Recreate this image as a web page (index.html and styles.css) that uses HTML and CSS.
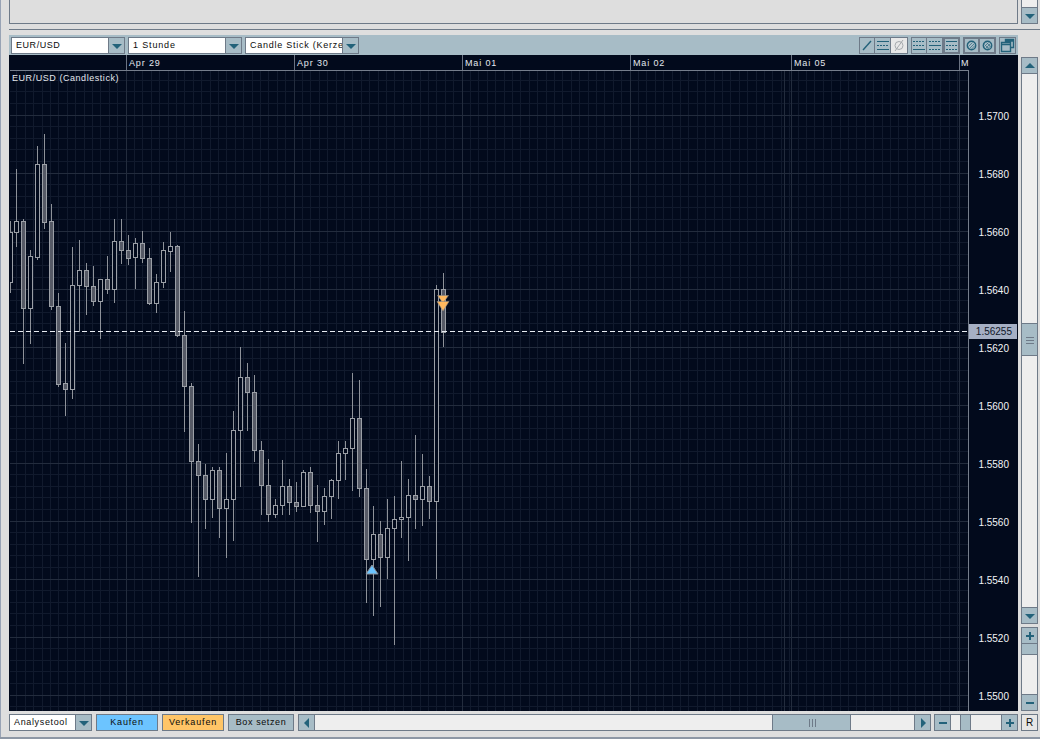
FILE: index.html
```html
<!DOCTYPE html>
<html lang="de">
<head>
<meta charset="utf-8">
<title>EUR/USD Chart</title>
<link rel="stylesheet" href="styles.css">
</head>
<body>
<div class="app">
  <div class="top-row">
    <div class="top-panel"></div>
    <div class="vscroll top-scroll">
      <div class="track"></div>
      <div class="btn square"><svg width="16" height="16" viewBox="0 0 16 16"><path class="tri" d="M3 6h10l-5 5z"/></svg></div>
    </div>
  </div>
  <div class="divider"></div>

  <div class="work">
    <div class="chart-col">
      <div class="toolbar">
        <div class="select s1"><span class="value">EUR/USD</span><span class="btn drop"><svg width="16" height="16" viewBox="0 0 16 16"><path class="tri" d="M3 6h10l-5 5z"/></svg></span></div>
        <div class="select s2"><span class="value">1 Stunde</span><span class="btn drop"><svg width="16" height="16" viewBox="0 0 16 16"><path class="tri" d="M3 6h10l-5 5z"/></svg></span></div>
        <div class="select s3"><span class="value">Candle Stick (Kerze</span><span class="btn drop"><svg width="16" height="16" viewBox="0 0 16 16"><path class="tri" d="M3 6h10l-5 5z"/></svg></span></div>
        <div class="tools">
          <div class="group">
            <span class="tool"><svg width="14" height="15" viewBox="0 0 14 15"><path class="ln bold" d="M3 12L11 3"/></svg></span>
            <span class="tool"><svg width="14" height="15" viewBox="0 0 14 15"><path class="ln" d="M1 3.500h12"/><path class="ln dash" d="M1 7.500h12"/><path class="ln" d="M1 11.500h12"/></svg></span>
            <span class="tool off"><svg width="14" height="15" viewBox="0 0 14 15"><circle class="ln grey" cx="7" cy="7.500" r="4"/><path class="ln grey" d="M3 13L11 2"/></svg></span>
          </div>
          <div class="group">
            <span class="tool"><svg width="14" height="15" viewBox="0 0 14 15"><path class="ln dash" d="M1 3.500h12"/><path class="ln dash" d="M1 7.500h12"/><path class="ln" d="M1 11.500h12"/></svg></span>
            <span class="tool"><svg width="14" height="15" viewBox="0 0 14 15"><path class="ln dash" d="M1 3.500h12"/><path class="ln" d="M1 7.500h12"/><path class="ln dash" d="M1 11.500h12"/></svg></span>
            <span class="tool on"><svg width="13" height="13" viewBox="0 1 13 13"><path class="ln" d="M1 3.500h11"/><path class="ln dash" d="M1 7.500h11"/><path class="ln dash" d="M1 11.500h11"/></svg></span>
          </div>
          <div class="group">
            <span class="tool on"><svg width="13" height="13" viewBox="0 0 13 13"><circle class="ln bold" cx="6.500" cy="6.500" r="4.200"/><path class="ln thin" d="M4.500 9.500L9.500 4.500M3.500 7.500L7.500 3.500M6.500 10L10 6.500"/></svg></span>
            <span class="tool on"><svg width="13" height="13" viewBox="0 0 13 13"><circle class="ln bold" cx="6.500" cy="6.500" r="4.200"/><path class="ln thin" d="M4.500 9.500L9.500 4.500M3.500 7.500L7.500 3.500M6.500 10L10 6.500M3.500 5.500L7.500 9.500M5.500 3.500L9.500 7.500"/></svg></span>
          </div>
          <div class="group">
            <span class="tool wide"><svg width="15" height="15" viewBox="0 0 15 15"><path class="ln bold" d="M5.500 4.500V1.500h8v8h-3M1.500 4.500h9v9h-9zM1.500 6.500h9M5.500 3h8"/></svg></span>
          </div>
        </div>
      </div>
      <svg id="chart" class="chart" width="1009" height="656" viewBox="9 55 1009 656">
        <defs><clipPath id="plot-clip"><rect x="10" y="70" width="958" height="641"/></clipPath></defs>
        <rect class="chart-bg" x="9" y="55" width="1009" height="656"/>
        <g id="grid"></g>
        <g id="candles" clip-path="url(#plot-clip)"></g>
        <path class="frame" d="M9.500 70.500H968.500V711"/>
        <path class="head-tick" d="M126.500 55V70M294.500 55V70M462.500 55V70M630.500 55V70M791.500 55V70M959.500 55V70"/>
        <path class="now" d="M10 331.500H969"/>
        <path class="buy" d="M372 565L378 574H366Z"/>
        <path class="sell" d="M437.500 295.500H448.500L443 303Z"/>
        <path class="sell" d="M437 301.500H449L443 311Z"/>
        <g class="labels">
          <text x="129" y="66">Apr 29</text>
          <text x="297" y="66">Apr 30</text>
          <text x="465" y="66">Mai 01</text>
          <text x="633" y="66">Mai 02</text>
          <text x="794" y="66">Mai 05</text>
          <text x="961" y="66">M</text>
          <text class="title" x="12" y="81">EUR/USD (Candlestick)</text>
        </g>
        <g class="axis">
          <text x="1009" y="120">1.5700</text>
          <text x="1009" y="178">1.5680</text>
          <text x="1009" y="236">1.5660</text>
          <text x="1009" y="294">1.5640</text>
          <text x="1009" y="352">1.5620</text>
          <text x="1009" y="410">1.5600</text>
          <text x="1009" y="468">1.5580</text>
          <text x="1009" y="526">1.5560</text>
          <text x="1009" y="584">1.5540</text>
          <text x="1009" y="642">1.5520</text>
          <text x="1009" y="700">1.5500</text>
        </g>
        <rect class="tag" x="969" y="324" width="48" height="15"/>
        <text class="tag-text" x="1012" y="335">1.56255</text>
      </svg>
    </div>

    <div class="side-col">
      <div class="vscroll main-scroll">
        <div class="btn square"><svg width="16" height="16" viewBox="0 0 16 16"><path class="tri" d="M3 10h10l-5-5z"/></svg></div>
        <div class="track grow-a"></div>
        <div class="btn thumb-v"><svg width="16" height="12" viewBox="0 0 16 12"><path class="grip" d="M4 3.500h8M4 6.500h8M4 9.500h8"/></svg></div>
        <div class="track grow-b"></div>
        <div class="btn square"><svg width="16" height="16" viewBox="0 0 16 16"><path class="tri" d="M3 6h10l-5 5z"/></svg></div>
      </div>
      <div class="vscroll zoom-scroll">
        <div class="btn square"><svg width="16" height="16" viewBox="0 0 16 16"><path class="sign" d="M8 4v8M4 8h8"/></svg></div>
        <div class="btn zoom-thumb-v"></div>
        <div class="track grow-b"></div>
        <div class="btn square"><svg width="16" height="16" viewBox="0 0 16 16"><path class="sign" d="M4 8h8"/></svg></div>
      </div>
    </div>
  </div>

  <div class="bottom">
    <div class="select s4"><span class="value">Analysetool</span><span class="btn drop"><svg width="16" height="16" viewBox="0 0 16 16"><path class="tri" d="M3 6h10l-5 5z"/></svg></span></div>
    <div class="action buy-btn">Kaufen</div>
    <div class="action sell-btn">Verkaufen</div>
    <div class="action box-btn">Box setzen</div>
    <div class="hscroll main-h">
      <div class="btn square"><svg width="16" height="16" viewBox="0 0 16 16"><path class="tri" d="M10 3v10l-5-5z"/></svg></div>
      <div class="track h1"></div>
      <div class="btn thumb-h"><svg width="12" height="16" viewBox="0 0 12 16"><path class="grip" d="M3.500 4v8M6.500 4v8M9.500 4v8"/></svg></div>
      <div class="track h2"></div>
      <div class="btn square"><svg width="16" height="16" viewBox="0 0 16 16"><path class="tri" d="M6 3v10l5-5z"/></svg></div>
    </div>
    <div class="hscroll zoom-h">
      <div class="btn square"><svg width="16" height="16" viewBox="0 0 16 16"><path class="sign" d="M4 8h8"/></svg></div>
      <div class="track h3"></div>
      <div class="btn zoom-thumb-h"></div>
      <div class="track h4"></div>
      <div class="btn square"><svg width="16" height="16" viewBox="0 0 16 16"><path class="sign" d="M8 4v8M4 8h8"/></svg></div>
    </div>
    <div class="reset">R</div>
  </div>
  <div class="foot"></div>
</div>
<script src="chart.js"></script>
</body>
</html>
```
FILE: styles.css
```css
* { box-sizing: border-box; }
html, body { margin: 0; padding: 0; background: #dedede; }
body { width: 1040px; height: 739px; overflow: hidden; font-family: "Liberation Sans", Arial, sans-serif; font-size: 9px; color: #0b0b0b; }
.app { width: 1040px; height: 739px; padding-left: 8px; border-left: 1px solid #98a3b5; display: flex; flex-direction: column; background: #dedede; }

.top-row { display: flex; height: 24px; gap: 3px; }
.top-panel { width: 1009px; border: 1px solid #6e7a88; border-top: 0; background: #dedede; }
.vscroll { width: 16px; display: flex; flex-direction: column; }
.top-scroll { width: 17px; }
.track { background: #eeeeee; border-left: 1px solid #6e7a88; border-right: 1px solid #6e7a88; flex: 1 1 auto; }
.btn { background: #a7bcc6; border: 1px solid #6e7a88; display: flex; align-items: center; justify-content: center; flex: none; }
.btn svg { display: block; flex: none; }
.square { width: 17px; height: 17px; }
.tri { fill: #23627a; }
.sign { stroke: #23627a; stroke-width: 2; fill: none; }
.grip { stroke: #6e7a88; stroke-width: 1; fill: none; }

.divider { height: 1px; margin-top: 5px; background: #6e7a88; }

.work { display: flex; gap: 3px; margin-top: 5px; height: 676px; }
.chart-col { width: 1009px; display: flex; flex-direction: column; }
.toolbar { height: 20px; background: #a7bcc6; display: flex; align-items: flex-start; padding: 2px 2px 0 2px; }
.select { height: 17px; display: flex; background: #fff; border: 1px solid #6e7a88; font-size: 9px; letter-spacing: 0.85px; overflow: hidden; flex: none; }
.select .value { flex: 1 1 0; min-width: 0; line-height: 15px; padding-left: 4px; white-space: nowrap; }
.drop { width: 16px; height: 15px; border-width: 0 0 0 1px; }
.s1 { width: 114px; margin-right: 3px; letter-spacing: .55px; }
.s2 { width: 114px; margin-right: 3px; }
.s3 { width: 114px; letter-spacing: .75px; }
.s4 { width: 83px; height: 17px; letter-spacing: .65px; }
.tools { display: flex; margin-left: auto; gap: 3px; }
.group { display: flex; }
.tool { width: 16px; height: 17px; background: #a7bcc6; border: 1px solid #6e7a88; display: flex; align-items: center; justify-content: center; flex: none; }
.tool + .tool { border-left: 0; }
.tool svg { display: block; flex: none; }
.tool.off { background: #e8e8e8; width: 17px; }
.tool.on { border: 2px solid #6e7a88; width: 17px; }
.tool.on + .tool.on { width: 16px; border-left: 0; }
.tool.wide { width: 17px; }
.ln { stroke: #23627a; stroke-width: 1; fill: none; }
.ln.bold { stroke-width: 1.4; }
.ln.dash { stroke-dasharray: 2 1; }
.ln.grey { stroke: #a5a9ad; }
.ln.thin { stroke-width: .8; stroke: #3f7488; }

.chart { display: block; }
.chart-bg { fill: #020a1c; }
.minor { stroke: #111a2d; stroke-width: 1; shape-rendering: crispEdges; }
.major { stroke: #232c3d; stroke-width: 1; shape-rendering: crispEdges; }
.frame { stroke: #767e8c; fill: none; stroke-width: 1; shape-rendering: crispEdges; }
.head-tick { stroke: #6b7382; fill: none; stroke-width: 1; shape-rendering: crispEdges; }
.now { stroke: #e8ecf2; stroke-width: 1; stroke-dasharray: 5 3; fill: none; shape-rendering: crispEdges; }
.wick { stroke: #8e9299; stroke-width: 1; shape-rendering: crispEdges; }
.body-down { fill: #565a66; stroke: #9b9fa6; stroke-width: 1; shape-rendering: crispEdges; }
.body-up { fill: #020a1c; stroke: #9b9fa6; stroke-width: 1; shape-rendering: crispEdges; }
.buy { fill: #6cc4ff; stroke: #8b9097; stroke-width: 1; }
.sell { fill: #ffb85e; stroke: #8b8a86; stroke-width: .6; }
.labels text { fill: #e4e8ee; font-size: 9px; letter-spacing: .85px; }
.labels .title { letter-spacing: .55px; }
.axis text { fill: #f2f4f7; font-size: 10px; text-anchor: end; }
.tag { fill: #a5afc4; }
.tag-text { fill: #10182a; font-size: 10px; text-anchor: end; }

.side-col { width: 17px; display: flex; flex-direction: column; padding-top: 22px; gap: 3px; }
.main-scroll { width: 17px; height: 567px; }
.grow-a { flex: 0 0 249px; }
.grow-b { flex: 1 1 auto; }
.thumb-v { height: 33px; }
.zoom-scroll { width: 17px; height: 84px; }
.zoom-thumb-v { height: 12px; margin-top: -1px; }

.bottom { display: flex; align-items: flex-start; margin-top: 3px; height: 17px; }
.action { width: 62px; height: 17px; line-height: 15px; border: 1px solid #6e7a88; text-align: center; letter-spacing: .85px; margin-left: 4px; flex: none; }
.buy-btn { background: #6cc4ff; }
.sell-btn { background: #ffc567; }
.box-btn { background: #a7bcc6; width: 66px; letter-spacing: .6px; }
.hscroll { display: flex; height: 17px; flex: none; }
.hscroll .track { border-width: 1px 0; border-style: solid; border-color: #6e7a88; }
.main-h { width: 633px; margin-left: 4px; }
.h1 { flex: 0 0 457px; }
.thumb-h { width: 79px; height: 17px; }
.h2 { flex: 1 1 auto; }
.zoom-h { width: 84px; margin-left: 3px; }
.h3 { flex: 0 0 9px; }
.zoom-thumb-h { width: 11px; height: 17px; }
.h4 { flex: 1 1 auto; }
.reset { width: 17px; height: 17px; margin-left: 3px; border: 1px solid #6e7a88; background: #e6e6e6; font-size: 10px; line-height: 15px; text-align: center; flex: none; }
.foot { height: 2px; margin: 6px 0 0 -9px; width: 1040px; background: #8d97a5; }
```
FILE: chart.js
```javascript
// x, wickTop, wickBottom, bodyTop, bodyBottom, filled
var CANDLES = [
  [10,221,293,232,282,0],[16,169,247,221,232,0],[23,219,364,221,308,1],[30,250,344,256,308,0],
  [37,146,260,164,257,0],[44,134,229,164,222,1],[51,204,310,221,306,1],[58,293,387,306,384,1],
  [65,343,416,383,389,1],[72,247,399,285,389,0],[79,240,332,270,285,0],[86,263,315,270,286,1],
  [93,266,306,286,301,1],[100,279,339,279,301,0],[107,256,294,279,289,1],[114,219,303,241,289,0],
  [121,219,264,241,250,1],[128,235,265,250,258,1],[135,238,289,243,257,0],[142,231,263,243,258,1],
  [149,248,305,258,303,1],[156,274,313,282,303,0],[163,242,288,250,282,0],[170,232,272,246,251,0],
  [177,245,337,246,335,1],[184,311,432,335,386,1],[191,383,523,386,461,1],[198,444,577,461,475,1],
  [205,464,529,475,499,1],[212,467,518,470,499,0],[219,467,538,470,508,1],[226,453,558,499,508,0],
  [233,411,541,430,499,0],[240,347,487,377,430,0],[247,363,431,377,392,1],[254,375,462,392,450,1],
  [261,441,515,450,485,1],[268,459,522,485,514,1],[275,499,518,505,514,0],[282,460,515,486,505,0],
  [289,479,515,486,502,1],[296,482,512,502,506,1],[303,470,506,472,506,0],[310,467,513,472,505,1],
  [317,485,542,505,511,1],[324,488,525,496,511,0],[331,479,519,480,496,0],[338,441,499,453,480,0],
  [345,441,480,448,453,0],[352,373,491,418,448,0],[359,380,497,418,488,1],[366,469,603,488,559,1],
  [373,506,616,534,559,0],[380,521,607,534,557,1],[387,499,579,528,557,0],[394,496,645,519,528,0],
  [401,461,538,517,519,0],[408,479,561,495,517,0],[415,435,529,495,499,1],[422,454,526,486,499,0],
  [429,476,519,486,501,1],[436,285,579,289,501,0],[443,273,347,289,332,1]
];

var NS = "http://www.w3.org/2000/svg";

function add(parent, tag, cls, attrs) {
  var el = document.createElementNS(NS, tag);
  el.setAttribute("class", cls);
  for (var k in attrs) el.setAttribute(k, attrs[k]);
  parent.appendChild(el);
  return el;
}

function line(parent, cls, x1, y1, x2, y2) {
  add(parent, "line", cls, { x1: x1, y1: y1, x2: x2, y2: y2 });
}

var grid = document.getElementById("grid");
var i, p;

// minor verticals, 8.4px apart
for (i = -14; i < 100; i++) {
  p = Math.floor(126 + i * 8.4) + 0.5;
  if (p > 10 && p < 968) line(grid, "minor", p, 71, p, 711);
}
// minor horizontals, 11.6px apart
for (i = -4; i < 52; i++) {
  p = Math.floor(115 + i * 11.6) + 0.5;
  if (p > 70 && p < 711) line(grid, "minor", 10, p, 968, p);
}
// major lines
[126.5, 294.5, 462.5, 630.5, 784.5, 791.5, 959.5].forEach(function (x) {
  line(grid, "major", x, 71, x, 711);
});
[115.5, 173.5, 231.5, 289.5, 347.5, 405.5, 463.5, 521.5, 579.5, 637.5, 695.5].forEach(function (y) {
  line(grid, "major", 10, y, 968, y);
});

var group = document.getElementById("candles");
CANDLES.forEach(function (c) {
  var x = c[0] + 0.5;
  line(group, "wick", x, c[1], x, c[2]);
  add(group, "rect", c[5] ? "body-down" : "body-up", {
    x: c[0] - 1.5, y: c[3] + 0.5, width: 4, height: c[4] - c[3]
  });
});
```
